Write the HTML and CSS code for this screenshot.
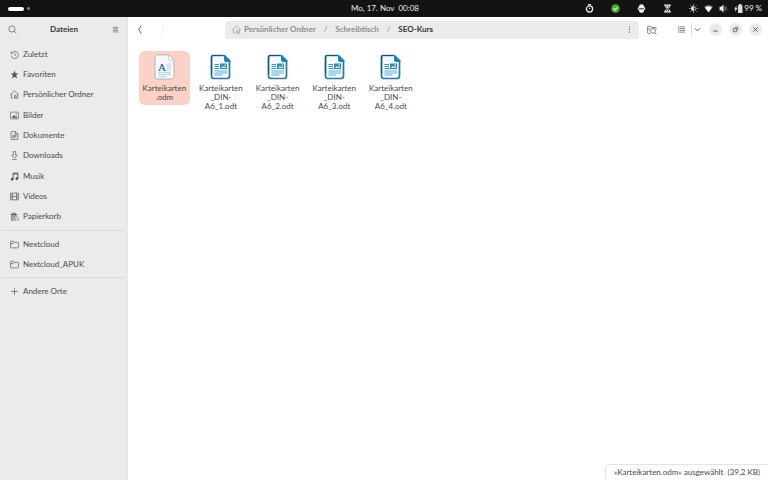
FILE: index.html
```html
<!DOCTYPE html>
<html lang="de">
<head>
<meta charset="utf-8">
<title>SEO-Kurs</title>
<link rel="stylesheet" href="styles.css">
</head>
<body>
<svg class="defs" aria-hidden="true">
  <symbol id="folder" viewBox="0 0 16 16"><path d="M1 5V3q0-1 1-1h3.500L7.500 4H14q1 0 1 1V13q0 1-1 1H2q-1 0-1-1zM1 6.500h4.500l2-2.500"/></symbol>
  <symbol id="home" viewBox="0 0 16 16"><path d="M.5 8.500 8 1.500l7.500 7M2.500 7v7.500h3M13.500 7v7.500H8V10.500q0-1.500 1.300-1.500t1.300 1.500v4"/></symbol>
  <symbol id="odt" viewBox="0 0 21 26">
    <path d="M3 1.500h11l5.500 5.500v15q0 2.500-2.500 2.500H4q-2.500 0-2.500-2.500V3.500Q1.500 1.500 3 1.500z" fill="#f6fafc" stroke="#2a7aa6" stroke-width="1.700"/>
    <path d="M1.500 20V3.500Q1.500 1.500 3 1.500h10" fill="none" stroke="#1f526e" stroke-width="1.200"/>
    <path d="M14 1h1l5.500 5.500V8H16q-2 0-2-2z" fill="#1685bd" stroke="none"/>
    <path d="M4.500 10.500H9M4.500 12.500H9M4.500 14.500H9" stroke="#2c94c7" stroke-width="1.200"/>
    <path d="M4.500 17h12.500M4.500 19h12.500M4.500 21h8" stroke="#5db1da" stroke-width="1"/>
    <path d="M10 9.500h7v5.500h-7z" fill="#2c8fc1" stroke="none"/>
    <path d="m11 14 1.500-2 1.500 1 1-1 1.500 2z" fill="#c9e9f7" stroke="none"/><circle cx="15.300" cy="11" r=".7" fill="#fff" stroke="none"/>
  </symbol>
</svg>

<header class="topbar">
  <div class="workspaces"><span class="pill"></span><span class="dot"></span></div>
  <time class="clock">Mo, 17. Nov&nbsp; 00:08</time>
  <div class="tray">
    <svg viewBox="0 0 16 16"><circle cx="8" cy="9" r="5.500" stroke-width="2.200"/><path d="M5.500 1.200h5M8 9V6.500" stroke-width="2"/></svg>
    <svg viewBox="0 0 16 16"><circle cx="8" cy="8" r="7.500" fill="#4caf22" stroke="none"/><path d="m4.500 8 2.500 2.500L11.500 6" stroke-width="2"/></svg>
    <svg viewBox="0 0 16 16"><path d="M8 .5q4.500 0 5 5.500h1.500v4H13q-.5 5.500-5 5.500T3 10H1.500V6H3Q3.500.500 8 .5z" fill="#eee" stroke="none"/><path d="M3.500 8.500h9" stroke="#131313" stroke-width="1.500"/></svg>
    <svg viewBox="0 0 16 16"><path d="M2 2h12M2 14h12" stroke-width="2.400"/><path d="M4 2q0 4 3 6-3 2-3 6M12 2q0 4-3 6 3 2 3 6" stroke-width="1.600"/><path d="M5 4h6L8 8zM5 13l3-3 3 3z" fill="#eee" stroke="none"/></svg>
    <div class="system">
      <svg viewBox="0 0 16 16"><circle cx="8" cy="8" r="3.500"/><path d="M8 4.500a3.500 3.500 0 0 0 0 7z" fill="#eee"/><path d="M8 .5v2M8 13.500v2M.5 8h2M13.500 8h2M2.700 2.700l1.500 1.500M11.800 11.800l1.500 1.500M2.700 13.300l1.500-1.500M11.800 4.200l1.500-1.500" stroke-width="1.600"/></svg>
      <svg viewBox="0 0 16 16"><path d="M0 5q8-6.500 16 0L8 15z" fill="#777" stroke="none"/><path d="M2 6.500q6-4 12 0L8 14.500z" fill="#fff" stroke="none"/></svg>
      <svg viewBox="0 0 16 16"><path d="M1 5h3l4-4v14l-4-4H1z" fill="#eee" stroke="none"/><path d="M10 5q2.500 3 0 6"/><path d="M12 2.500q5 5.500 0 11" stroke="#777"/></svg>
      <span class="battery"><svg viewBox="0 0 16 16"><path d="M9 2V0h4v2h2v14H7V2z" fill="#ddd" stroke="none"/><path d="M4.500 3 .5 9h2L2 14l4-7H4z" fill="#eee" stroke="none"/></svg>99 %</span>
    </div>
  </div>
</header>

<div class="window">
  <aside class="sidebar">
    <div class="side-head">
      <button aria-label="Suchen"><svg viewBox="0 0 16 16"><circle cx="7" cy="7" r="5.500"/><path d="m11 11 4 4"/></svg></button>
      <h1>Dateien</h1>
      <button aria-label="Menü"><svg class="small" viewBox="0 0 16 16"><path d="M2 3h12M2 6.500h12M2 10h12M2 13.500h12" stroke-width="1.300"/></svg></button>
    </div>
    <nav>
      <div class="places main-places">
        <a href="#"><svg viewBox="0 0 16 16"><path d="M2 3v3h3M2.500 6A6.500 6.500 0 1 1 2 10M8.500 4.500V9l2.500 2"/></svg>Zuletzt</a>
        <a href="#"><svg viewBox="0 0 16 16"><path d="m8 1 2 5h5l-4 3.500 1.500 5.500L8 12l-4.500 3L5 9.500 1 6h5z" fill="#555" stroke="none"/></svg>Favoriten</a>
        <a href="#"><svg><use href="#home"/></svg>Persönlicher Ordner</a>
        <a href="#"><svg viewBox="0 0 16 16"><rect x="1" y="2" width="14" height="12" rx="1"/><path d="m3 12 4-5 3 3 1.500-1L13 12z" fill="#555" stroke="none"/><circle cx="11" cy="5.500" r="1.200" fill="#555" stroke="none"/></svg>Bilder</a>
        <a href="#"><svg viewBox="0 0 16 16"><path d="M3 1h6.500L14 5.500V15H2V2q0-1 1-1zM9.500 1v4.500H14M4.500 7.500h7M4.500 9.500h7M4.500 11.500h5"/></svg>Dokumente</a>
        <a href="#"><svg viewBox="0 0 16 16"><path d="M6 1h4v6.500h3L8 12.500 3 7.500h3zM4 15h8"/></svg>Downloads</a>
        <a href="#"><svg viewBox="0 0 16 16"><path d="M5.500 12.500V2h8.500v9.500M5.500 3.500H14" stroke-width="1.500"/><circle cx="3.800" cy="12.800" r="2" fill="#555"/><circle cx="12.200" cy="11.800" r="2" fill="#555"/></svg>Musik</a>
        <a href="#"><svg viewBox="0 0 16 16"><path d="M1 2h14v12H1zM4.500 2v12M11.500 2v12M4.500 8h7M1 6h3.500M1 10h3.500M11.500 6H15M11.500 10H15"/></svg>Videos</a>
        <a href="#"><svg viewBox="0 0 16 16"><path d="M1 4.500h12M4.500 4.500V2h5v2.500M2.500 5.500h9M3 6v8.500h4M5.500 7v6M8 7v3M10.500 6v2" stroke-width="1.300"/><path d="m10 9.500 2-1 2 1.500M9.500 11 8 14h3M15 11.500l.5 2.500H12"/></svg>Papierkorb</a>
      </div>
      <div class="places">
        <a href="#"><svg><use href="#folder"/></svg>Nextcloud</a>
        <a href="#"><svg><use href="#folder"/></svg>Nextcloud_APUK</a>
      </div>
      <div class="places">
        <a href="#"><svg viewBox="0 0 16 16"><path d="M8 2v12M2 8h12"/></svg>Andere Orte</a>
      </div>
    </nav>
  </aside>

  <main>
    <div class="toolbar">
      <div class="history">
        <button aria-label="Zurück"><svg viewBox="0 0 16 16"><path d="M9 1 5 8l4 7" stroke-width="1.500"/></svg></button>
        <button aria-label="Vor" disabled><svg viewBox="0 0 16 16"><path d="m6 1 4 7-4 7"/></svg></button>
      </div>
      <div class="pathbar">
        <a href="#"><svg><use href="#home"/></svg>Persönlicher Ordner</a><span>/</span><a href="#">Schreibtisch</a><span>/</span><a class="current" href="#">SEO-Kurs</a>
        <button aria-label="Ordnermenü"><svg viewBox="0 0 16 16"><path d="M7 2.500h2v2H7zM7 7h2v2H7zM7 11.500h2v2H7z" fill="#555" stroke="none"/></svg></button>
      </div>
      <button class="find" aria-label="Ordner durchsuchen"><svg viewBox="0 0 16 16"><path d="M5 13.500H2.500q-1.500 0-1.500-1.500V3q0-1 1-1h3.500L7 4h6.500q1 0 1 1v2M1 6.500h4"/><circle cx="9.500" cy="9.500" r="3.800"/><path d="m12.200 12.200 3 3"/></svg></button>
      <div class="view">
        <button aria-label="Listenansicht"><svg class="small" viewBox="0 0 16 16"><path d="M0 2h3M0 6h3M0 10h3M0 14h3M4 2h12M4 6h12M4 10h12M4 14h12" stroke-width="1.500"/></svg></button>
        <button class="options" aria-label="Ansichtsoptionen"><svg class="small" viewBox="0 0 16 16"><path d="m2 5 6 6 6-6" stroke-width="2"/></svg></button>
      </div>
      <div class="controls">
        <button aria-label="Minimieren"><svg viewBox="0 0 16 16"><path d="M3 11.500h10" stroke-width="2"/></svg></button>
        <button aria-label="Wiederherstellen"><svg viewBox="0 0 16 16"><path d="M3 6h7v7H3zM6 3h7v7" stroke-width="1.600"/></svg></button>
        <button aria-label="Schließen"><svg viewBox="0 0 16 16"><path d="m3 3 10 10M13 3 3 13" stroke-width="2"/></svg></button>
      </div>
    </div>
    <ul class="files">
      <li class="selected"><svg viewBox="0 0 21 26">
        <path d="M3 .8h11.500L20 6.300V23q0 2-2 2H3q-2 0-2-2V2.800q0-2 2-2z" fill="#f7f8f9" stroke="#a9a5a4" stroke-width=".8"/>
        <path d="M14.500.8 20 6.300h-3.500q-2 0-2-2z" fill="#fff" stroke="#b5b1b0" stroke-width=".6"/>
        <path d="M12.500 10H17M12.500 12H17M12.500 14H17M12.500 16H17M4 18.500h13M4 20.500h13M4 22.500h8" stroke="#aed8ee"/>
        <text x="4" y="17" font-family="Liberation Serif, serif" font-size="11" fill="#20609c" stroke="#20609c" stroke-width=".2">A</text>
      </svg><span>Karteikarten<br>.odm</span></li>
      <li><svg><use href="#odt"/></svg><span>Karteikarten<br>_DIN-<br>A6_1.odt</span></li>
      <li><svg><use href="#odt"/></svg><span>Karteikarten<br>_DIN-<br>A6_2.odt</span></li>
      <li><svg><use href="#odt"/></svg><span>Karteikarten<br>_DIN-<br>A6_3.odt</span></li>
      <li><svg><use href="#odt"/></svg><span>Karteikarten<br>_DIN-<br>A6_4.odt</span></li>
    </ul>
    <div class="status" role="status">»Karteikarten.odm« ausgewählt&nbsp; (39,2 KB)</div>
  </main>
</div>
</body>
</html>
```
FILE: styles.css
```css
* { box-sizing: border-box; }

body {
  margin: 0;
  min-height: 100vh;
  display: flex;
  flex-direction: column;
  background: #fff;
  color: #4a4a4a;
  font: 8px/9px Lato, sans-serif;
}

svg {
  width: 9px;
  height: 9px;
  flex: none;
  display: block;
  fill: none;
  stroke: currentColor;
  stroke-width: 1.1;
}

svg.small { width: 7px; height: 7px; }
svg.defs { position: absolute; width: 0; height: 0; }

a { color: inherit; text-decoration: none; }

button {
  display: grid;
  place-items: center;
  padding: 0;
  width: 13px;
  height: 17px;
  border: 0;
  background: none;
  color: inherit;
  font: inherit;
}

/* Top panel */
.topbar {
  display: grid;
  grid-template-columns: 1fr auto 1fr;
  align-items: center;
  height: 17px;
  padding: 0 6px 0 8px;
  background: #131313;
  color: #eee;
}

.workspaces { display: flex; align-items: center; gap: 3px; }
.pill { width: 16px; height: 4px; border-radius: 2px; background: #fff; }
.dot { width: 3px; height: 3px; border-radius: 50%; background: #888; }
.tray { display: flex; justify-content: flex-end; align-items: center; gap: 17px; }
.system { display: flex; align-items: center; gap: 6px; }
.battery { display: flex; align-items: center; gap: 1px; white-space: nowrap; }

/* Window */
.window { flex: 1; display: flex; }

.sidebar {
  width: 128px;
  flex: none;
  background: #ebebeb;
  border-right: 1px solid #e4e4e4;
}

.side-head {
  display: flex;
  align-items: center;
  justify-content: space-between;
  height: 25px;
  padding: 0 5px 0 6px;
}

h1 { margin: 0; font-size: 8px; font-weight: 700; color: #333; }

nav { padding: 2px 2px 0; }

.places { display: grid; grid-auto-rows: 20px; padding: 3px 0; }
.places + .places { border-top: 1px solid #d8d8d8; }
.main-places { height: 186px; grid-auto-rows: 1fr; padding: 0 0 3px; }
.places a { display: flex; align-items: center; gap: 4px; padding-left: 8px; }

main { flex: 1; min-width: 0; display: flex; flex-direction: column; }

.toolbar {
  display: flex;
  align-items: center;
  height: 25px;
  padding: 0 6px;
}

.history { display: flex; gap: 9px; }
.history button:disabled { color: #ddd; }

.pathbar {
  flex: 1;
  display: flex;
  align-items: center;
  gap: 8px;
  height: 18px;
  margin-left: 56px;
  padding: 0 3px 0 7px;
  border-radius: 4px;
  background: #ebebeb;
  color: #8c8c8c;
  font-weight: 700;
}

.pathbar a { display: flex; align-items: center; gap: 3px; }
.pathbar span { font-weight: 400; }
.pathbar .current { color: #333; }
.pathbar button { margin-left: auto; color: #4a4a4a; }

.find { margin-left: 6px; }
.find svg { width: 10px; height: 10px; }
.view { display: flex; margin-left: 17px; gap: 3px; }
.view .options { position: relative; }
.view .options::before { content: ""; position: absolute; left: 0; top: 2px; width: 1px; height: 13px; background: #ddd; }

.controls { display: flex; gap: 7px; margin-left: 5px; }
.controls button { height: 13px; border-radius: 50%; background: #ebebeb; }
.controls svg { width: 7px; height: 7px; }

.files {
  display: grid;
  grid-template-columns: repeat(11, 1fr);
  align-items: start;
  gap: 6px;
  margin: 9px 12px 0 11px;
  padding: 0;
  list-style: none;
}

.files li {
  display: flex;
  flex-direction: column;
  align-items: center;
  gap: 4px;
  padding: 3px 0;
  border-radius: 6px;
  text-align: center;
}

.files svg { width: 21px; height: 26px; }
.files .selected { background: #fad2c6; }

.status {
  margin-top: auto;
  align-self: flex-end;
  height: 16px;
  padding: 3px 8px;
  border: 1px solid #e4e4e4;
  border-width: 1px 0 0 1px;
  border-radius: 5px 0 0;
}
```
